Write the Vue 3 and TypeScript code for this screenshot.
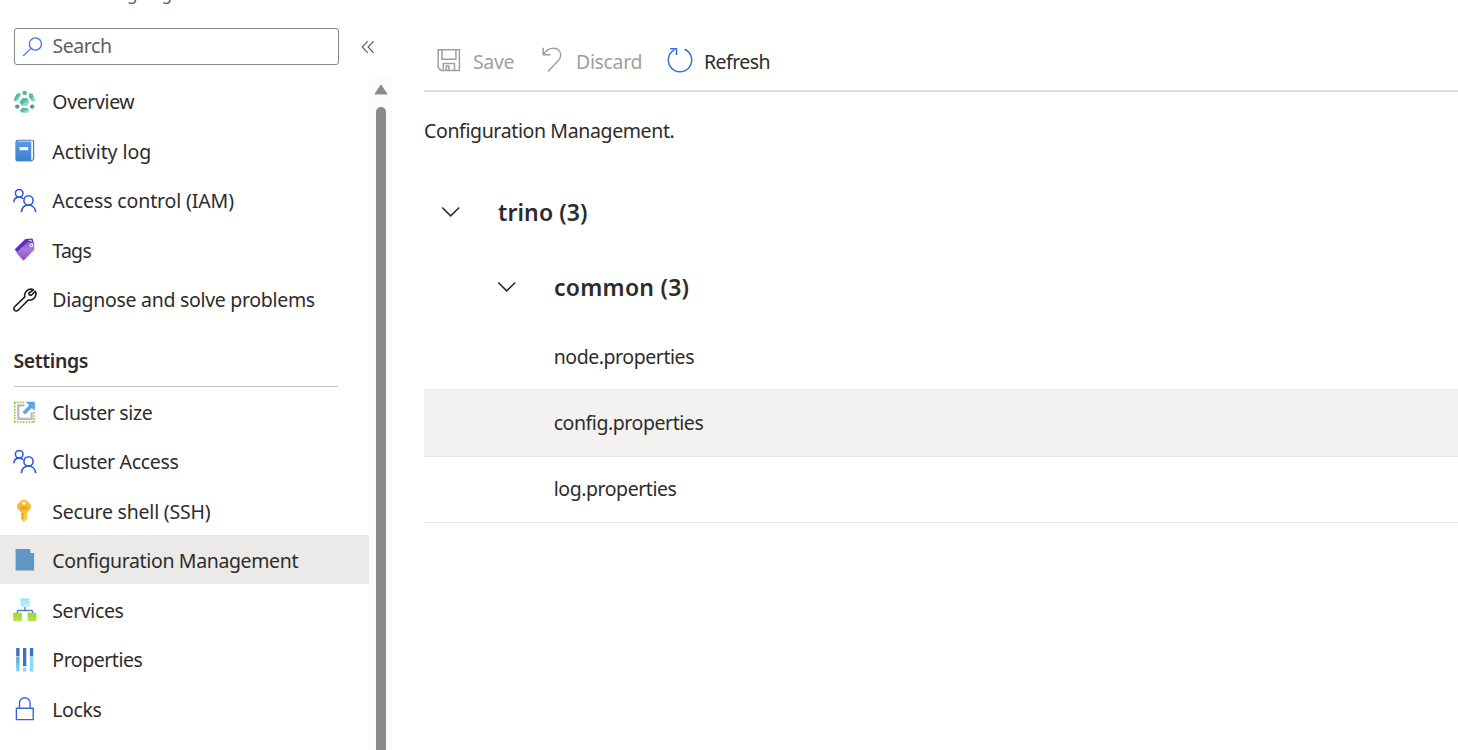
<script setup lang="ts">
interface NavItem {
  icon: string
  label: string
  space: number
  selected?: boolean
}

const general: NavItem[] = [
  { icon: 'overview', label: 'Overview', space: -0.38 },
  { icon: 'log', label: 'Activity log', space: -0.08 },
  { icon: 'people', label: 'Access control (IAM)', space: -0.13 },
  { icon: 'tag', label: 'Tags', space: -0.7 },
  { icon: 'wrench', label: 'Diagnose and solve problems', space: -0.3 },
]

const settings: NavItem[] = [
  { icon: 'resize', label: 'Cluster size', space: -0.37 },
  { icon: 'people', label: 'Cluster Access', space: -0.33 },
  { icon: 'key', label: 'Secure shell (SSH)', space: -0.22 },
  { icon: 'file', label: 'Configuration Management', space: -0.36, selected: true },
  { icon: 'services', label: 'Services', space: -0.4 },
  { icon: 'bars', label: 'Properties', space: -0.46 },
  { icon: 'lock', label: 'Locks', space: -0.42 },
]

const sections = [
  { title: '', items: general },
  { title: 'Settings', items: settings },
]

const files = [
  { name: 'node.properties', active: false },
  { name: 'config.properties', active: true },
  { name: 'log.properties', active: false },
]
</script>

<template>
  <div class="page">
    <svg class="defs" width="0" height="0" aria-hidden="true">
      <defs>
        <linearGradient id="teal" x1="0" y1="0" x2="1" y2="1">
          <stop offset="0.5" stop-color="#5db5a4" /><stop offset="0.6" stop-color="#80dcc6" />
        </linearGradient>
        <linearGradient id="book" x1="0" y1="0" x2="0" y2="1">
          <stop offset="0" stop-color="#5c9ae6" /><stop offset="1" stop-color="#3f7dd2" />
        </linearGradient>
        <linearGradient id="purple" x1="0" y1="0" x2="0" y2="1">
          <stop offset="0" stop-color="#8a5bd0" /><stop offset="0.4" stop-color="#a47ad8" /><stop offset="1" stop-color="#8450c4" />
        </linearGradient>
        <linearGradient id="gold" x1="0" y1="0" x2="0" y2="1">
          <stop offset="0" stop-color="#f5b528" /><stop offset="1" stop-color="#fbcf45" />
        </linearGradient>
        <linearGradient id="sky" x1="0" y1="0" x2="0" y2="1">
          <stop offset="0" stop-color="#9be2fb" /><stop offset="1" stop-color="#c0effd" />
        </linearGradient>
        <linearGradient id="green" x1="0" y1="0" x2="0" y2="1">
          <stop offset="0" stop-color="#9bd638" /><stop offset="1" stop-color="#b5e34d" />
        </linearGradient>
        <linearGradient id="cyan" x1="0" y1="0" x2="0" y2="1">
          <stop offset="0" stop-color="#4aa7c4" /><stop offset="1" stop-color="#76dcf8" />
        </linearGradient>
      </defs>
    </svg>

    <aside class="sidebar">
      <div class="subtitle"><span>g</span><span>g</span></div>
      <div class="search-row">
        <div class="search">
          <svg width="22" height="22" viewBox="0 0 22 22" fill="none" stroke="#3d74d6" stroke-width="1.3">
            <circle cx="13.4" cy="8" r="6.1" /><path d="M9.1 12.4 1.2 19.9" />
          </svg>
          <span>Search</span>
        </div>
        <svg class="collapse" width="14" height="14" viewBox="0 0 14 14" fill="none" stroke="#605e5c" stroke-width="1.2">
          <path d="M6.8 1.2 1.3 7l5.500 5.800M12.600 1.200 7.100 7l5.500 5.800" />
        </svg>
      </div>

      <div class="menu">
        <nav>
          <section v-for="section in sections" :key="section.title">
            <h2 v-if="section.title">{{ section.title }}</h2>
            <div v-for="item in section.items" :key="item.label" class="item" :class="{ selected: item.selected }">
              <svg width="24" height="24" viewBox="0 0 24 24" fill="none">
                <g v-if="item.icon === 'overview'">
                  <path d="m9.500 8 4.600-.1 2.400 3.800-2.600 4-5.200.1-2.300-3.700z" fill="url(#teal)" />
                  <circle cx="11.700" cy="3" r="2.300" fill="#58b29f" />
                  <circle cx="4.300" cy="16.600" r="2.200" fill="#4fa08e" />
                  <circle cx="19.100" cy="16.600" r="2.200" fill="#4fa08e" />
                  <path d="M4 3.600 7.400 3.300 7.600 6.200l-3 4.900-3.500.2L1.300 8z" fill="url(#teal)" />
                  <path d="m16 3.300 3.500.5 3 7.400-3.500.2-3.200-4.700z" fill="url(#teal)" />
                  <path d="m9 18.100 5.500-.1 2 2.500-1.700 2.300H8.900l-2-2.300z" fill="url(#teal)" />
                </g>
                <g v-else-if="item.icon === 'log'">
                  <path d="M4.600.7h15a1.600 1.600 0 0 1 1.600 1.600v18.200L19 22.300H4.500A2 2 0 0 1 2.600 20.500V2.700a2 2 0 0 1 2-2z" fill="#5579b8" />
                  <path d="M4.300 1.800h15.700v18.500l-2 1z" fill="#f1f5fb" />
                  <path d="M3 2.500h15.200V22.300H4a1.400 1.400 0 0 1-1.400-1.400V2.500z" fill="url(#book)" />
                  <path d="M6.600 8h8.600v3.200H6.600z" fill="#fff" />
                </g>
                <g v-else-if="item.icon === 'people'" stroke="#3058d8" stroke-width="1.550">
                  <circle cx="6.200" cy="4.300" r="3.800" />
                  <path d="M.8 13.200c.2-3 2.300-5.100 5.400-5.100 1.700 0 3 .6 4 1.700" />
                  <circle cx="15.500" cy="11.400" r="4.600" />
                  <path d="M8.300 23.200c.5-4.300 3.300-7.200 7.200-7.200s6.800 2.900 7.300 7.200" />
                </g>
                <g v-else-if="item.icon === 'tag'">
                  <path d="M12.300.9 19.500.6l1.200 4-13 13.300L1.600 11.600z" fill="#5a2fc0" />
                  <path d="m14.200 4.300 5.600-.3 1.400 1.200.1 6.600L10.500 22.700 3.200 14.700z" fill="url(#purple)" />
                  <path d="M15.800 3.200c.6-1.400 2.600-1.400 3 .4" stroke="#e2d3f8" stroke-width="1.100" />
                  <circle cx="18.300" cy="7.300" r="1.500" fill="#a47ad8" stroke="#f4eefd" stroke-width="1.100" />
                </g>
                <g v-else-if="item.icon === 'wrench'" stroke="#1b1a19" stroke-width="1.600" stroke-linejoin="round">
                  <path d="M20.500 1.800a6.200 6.200 0 0 0-8.700 7.100L1.600 18.800a2.400 2.400 0 0 0 3.500 3.500L15.300 12a6.200 6.200 0 0 0 7-8.700l-4 4-2-.4-.4-1.900z" />
                </g>
                <g v-else-if="item.icon === 'resize'">
                  <path d="M1 2.300h10M1 22h20.700M1.800 3v19M21 12.300v10" stroke="#86c33c" stroke-width="1.600" stroke-dasharray="1.600 1.300" />
                  <path d="M11.500 5.300H5.300v13.600h13.300v-6.300" stroke="#b9b9b9" stroke-width="2.200" />
                  <path d="M12.700 1.800h9.200v8.900l-3.100-2.800-6.700 6.600-2.600-2.600 6.700-6.700z" fill="#60a1ec" />
                </g>
                <g v-else-if="item.icon === 'key'">
                  <path d="M9.200.7h3.500l5.300 5.200v3.300l-3.900 4.200v6.200l-3.100 3.700-3-2.900v-7L4 9.200V5.900z" fill="url(#gold)" />
                  <circle cx="10.900" cy="4" r="1.700" fill="#fff6dc" />
                  <path d="M7.600 8.300h6.800M7.600 10h6.800M9.800 14v6" stroke="#d89818" stroke-width="1" />
                </g>
                <path v-else-if="item.icon === 'file'" d="M2.600 1h14.700v4h3.800v17.500H2.600z" fill="#5e96c4" />
                <g v-else-if="item.icon === 'services'">
                  <path d="M12 9v3.500M4.300 15v-1.200q0-1.300 1.300-1.300h12.800q1.300 0 1.300 1.300V15" stroke="#5577bb" stroke-width="1.300" />
                  <path d="M7.500.5h9v8.300h-9z" fill="url(#sky)" />
                  <path d="M.2 14.700h8.600V23H.2zM14.600 14.700h8.800V23h-8.800z" fill="url(#green)" />
                </g>
                <g v-else-if="item.icon === 'bars'">
                  <path d="M3.200.1h3.300v8.300H3.200zM10 .1h3.300v18H10zM16.900.1h3.300v8.300h-3.300z" fill="#3c6fc6" />
                  <path d="M3.200 9h3.300v14.400H3.200z" fill="url(#cyan)" />
                  <path d="M10 20h3.300v3.400H10zM16.900 9h3.300v14.400h-3.300z" fill="#7ddcf7" />
                  <path d="M2.800 8.300h4v1h-4zM9.700 18.500h4v1h-4zM16.500 8.300h4v1h-4z" fill="#d4d6d8" />
                </g>
                <g v-else stroke="#3d63dc" stroke-width="1.400">
                  <path d="M3.400 11.300h16.800v11.300H3.400z" />
                  <path d="M6.500 11.300V6.100a5.300 5.300 0 0 1 10.600 0v5.200" />
                </g>
              </svg>
              <span :style="{ letterSpacing: item.space + 'px' }">{{ item.label }}</span>
            </div>
          </section>
        </nav>
        <div class="scrollbar">
          <svg width="14" height="11" viewBox="0 0 14 11"><path d="M7 1 13 10H1z" fill="#8a8a8a" stroke="#8a8a8a" stroke-linejoin="round" /></svg>
          <i />
        </div>
      </div>
    </aside>

    <main>
      <div class="toolbar">
        <svg width="24" height="24" viewBox="0 0 24 24" fill="none" stroke="#a19f9d" stroke-width="1.500">
          <path d="M1.200 1.800h21.200v20.600H4l-2.800-2.800zM5 1.800v9.500h13.900V1.800M6.300 22.400v-7h11.200v7M9.300 22.400V18h2.500v4.400" />
        </svg>
        <span class="off save">Save</span>
        <svg width="20" height="26" viewBox="0 0 20 26" fill="none" stroke="#a19f9d" stroke-width="1.500">
          <path d="M1.200.7v7.100h7.200M1.500 7.600C4 3.300 7.500 1.300 11.500 1.300c4.300 0 7.200 3 7.200 6.600 0 2.300-.8 4-2.400 5.700L6 24.500" />
        </svg>
        <span class="off discard">Discard</span>
        <svg width="26" height="26" viewBox="0 0 26 26" fill="none" stroke="#3270d8" stroke-width="1.500">
          <path d="M17.500 2.300A11.700 11.700 0 1 1 7.300 2.900M3.100 1.700h6.400v6.300" />
        </svg>
        <span class="refresh">Refresh</span>
      </div>
      <p class="intro">Configuration Management.</p>
      <div class="group">
        <svg width="20" height="12" viewBox="0 0 20 12" fill="none" stroke="#292827" stroke-width="1.500"><path d="m1.200 1.500 8.500 8.400 8.500-8.400" /></svg>
        <span class="trino">trino (3)</span>
      </div>
      <div class="group nested">
        <svg width="20" height="12" viewBox="0 0 20 12" fill="none" stroke="#292827" stroke-width="1.500"><path d="m1.200 1.500 8.500 8.400 8.500-8.400" /></svg>
        <span class="common">common (3)</span>
      </div>
      <div v-for="file in files" :key="file.name" class="file" :class="{ active: file.active }"><span>{{ file.name }}</span></div>
    </main>
  </div>
</template>

<style>
body { overflow: hidden; background: #fff; }
</style>

<style scoped>
.page { width: 1458px; height: 750px; display: flex; overflow: hidden; font: 19.5px/24px "Noto Sans", sans-serif; color: #2d2c2b; white-space: nowrap; }
.defs { position: absolute; }
svg { flex: none; display: block; }
.sidebar { width: 424px; flex: none; }
.subtitle { box-sizing: border-box; height: 28px; display: flex; gap: 24px; padding-left: 127px; font-size: 17px; line-height: 24px; color: #605e5c; overflow: hidden; }
.subtitle span { margin-top: -18px; }
.search-row { height: 38px; display: flex; align-items: flex-start; gap: 22px; padding-left: 13.5px; }
.search { box-sizing: border-box; width: 325px; height: 37px; border: 1px solid #8a8886; border-radius: 3px; display: flex; align-items: center; gap: 9px; padding: 0 0 0 7px; color: #605e5c; letter-spacing: -0.45px; }
.search svg { margin-top: 1px; }
.search span { padding-bottom: 1px; }
.collapse { margin-top: 11.5px; }
.menu { display: flex; height: 684px; padding-top: 11px; box-sizing: border-box; overflow: hidden; }
nav { width: 369px; flex: none; }
.item { height: 49.500px; display: flex; align-items: center; gap: 15px; padding: 1px 0 0 13.300px; box-sizing: border-box; }
.item svg { margin-top: -1px; }
.item.selected { height: 49px; background: #ebeae9; padding-top: 3px; margin: -1.3px 0 1.800px; }
h2 { margin: 0 31px 1px 13.500px; height: 62px; box-sizing: border-box; border-bottom: 1px solid #c8c6c4; padding-top: 24.6px; font-size: 19.500px; line-height: 24px; font-weight: 600; letter-spacing: -0.4px; }
.scrollbar { width: 23px; background: #fcfcfc; display: flex; flex-direction: column; align-items: center; padding-top: 7px; box-sizing: border-box; }
.scrollbar i { width: 10px; height: 700px; flex: none; margin-top: 12px; background: #8a8a8a; border-radius: 5px; }
main { flex: 1; }
.toolbar { height: 92px; box-sizing: border-box; border-bottom: 2px solid #dedddc; display: flex; align-items: center; padding: 30px 0 0 12.500px; }
.toolbar span { padding-top: 3px; letter-spacing: -0.35px; }
.off { color: #a19f9d; }
.toolbar .save { width: 68.500px; margin-left: 12.5px; }
.toolbar .discard { width: 77px; margin-left: 14.5px; margin-right: 13.5px; }
.toolbar .refresh { margin-left: 11.5px; letter-spacing: -0.550px; }
.intro { margin: 27px 0 0; letter-spacing: -0.370px; }
.group { display: flex; align-items: center; height: 75px; padding-left: 17.4px; gap: 36.6px; font-size: 23px; font-weight: 600; }
.group span { padding-top: 1.500px; }
.intro + .group { margin-top: 31px; }
.group.nested { padding-left: 73.400px; }
.trino { letter-spacing: 0.100px; }
.common { letter-spacing: 0.250px; }
.file { height: 66px; box-sizing: border-box; padding-left: 129.700px; display: flex; align-items: center; border-bottom: 1px solid #e6e5e4; letter-spacing: -0.440px; }
.file.active { height: 67px; padding-bottom: 1px; background: #f3f2f1; }
.file.active + .file { padding-bottom: 2px; }
</style>
